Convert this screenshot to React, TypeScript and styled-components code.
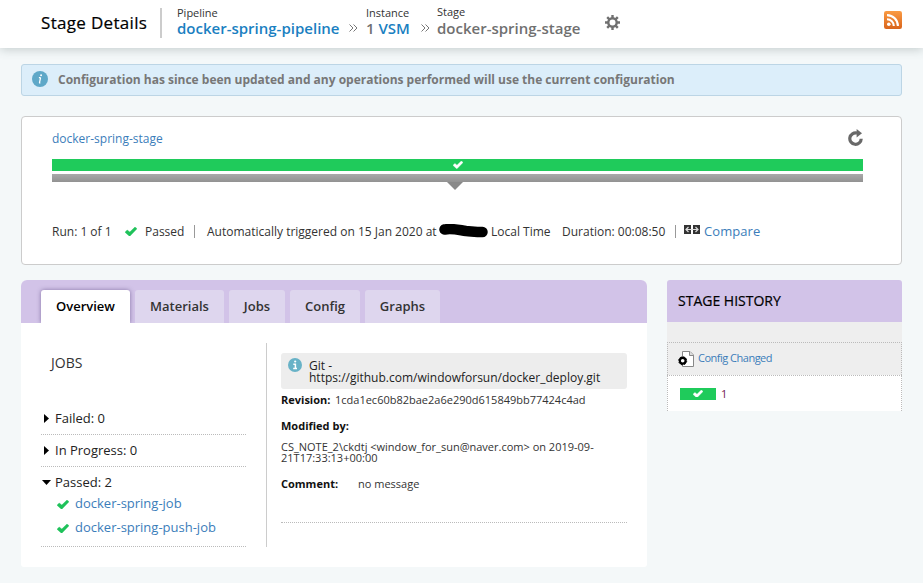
import React from "react";
import styled, { createGlobalStyle } from "styled-components";

const GlobalStyle = createGlobalStyle`
  * { box-sizing: border-box; }
  html, body { margin: 0; padding: 0; }
  body {
    background: #f4f8f9;
    color: #333;
    font-family: "Open Sans", "Noto Sans", sans-serif;
    font-size: 12px;
    overflow: hidden;
  }
`;

const Page = styled.div`
  width: 923px;
  height: 583px;
  overflow: hidden;
`;

const Header = styled.header`
  display: flex;
  height: 48px;
  padding: 0 21px 0 41px;
  background: #fff;
  box-shadow: 0 1px 10px rgba(70, 90, 90, 0.3);
`;

const Title = styled.h1`
  width: 119px;
  margin: 0;
  padding-top: 11px;
  font-size: 17px;
  font-weight: 500;
  line-height: 24px;
  letter-spacing: 0.32px;
  white-space: nowrap;
  color: #000;
  -webkit-text-stroke: 0.2px #000;
`;

const HeaderRule = styled.div`
  width: 2px;
  height: 30px;
  margin: 8px 15px 0 0;
  background: #ccc;
`;

const Crumb = styled.div<{ $width: number; $lift?: boolean }>`
  width: ${(p) => p.$width}px;
  padding-top: ${(p) => (p.$lift ? 4 : 5)}px;
  white-space: nowrap;
`;

const CrumbLabel = styled.div<{ $lift?: boolean }>`
  height: ${(p) => (p.$lift ? 16 : 15)}px;
  font-size: 11px;
  line-height: 16px;
  color: #333;
`;

const CrumbValue = styled.div`
  font-size: 15px;
  font-weight: 600;
  line-height: 16px;
  color: #707070;
`;

const BlueText = styled.a`
  color: #1a7fc1;
  text-decoration: none;
`;

const Chevrons = styled.svg<{ $width: number }>`
  width: 9px;
  height: 8px;
  margin: 24px ${(p) => p.$width - 9}px 0 0;
`;

const GearIcon = styled.svg`
  width: 15px;
  height: 15px;
  margin-top: 15px;
`;

const FeedIcon = styled.svg`
  width: 18px;
  height: 18px;
  margin: 11px 0 0 auto;
`;

const Main = styled.main`
  padding: 16px 21px 0;
`;

const Notice = styled.div`
  display: flex;
  align-items: center;
  gap: 10px;
  height: 32px;
  padding: 0 10px 2px;
  border: 1px solid #bcd5e5;
  border-radius: 3px;
  background: #dceefa;
  color: #777;
  font-weight: 700;
  letter-spacing: -0.01px;
  white-space: nowrap;
`;

const NoticeIcon = styled.svg`
  width: 16px;
  height: 16px;
`;

const StageCard = styled.section`
  height: 149px;
  margin-top: 20px;
  padding: 14px 38px 0 30px;
  border: 1px solid #ccc;
  border-radius: 4px;
  background: #fff;
`;

const StageHead = styled.div`
  display: flex;
  justify-content: space-between;
  height: 28px;
`;

const Link = styled.a<{ $size?: number; $spacing?: number }>`
  font-size: ${(p) => p.$size ?? 12}px;
  letter-spacing: ${(p) => p.$spacing ?? 0}px;
  line-height: 16px;
  color: #3b7dba;
  text-decoration: none;
  white-space: nowrap;
`;

const RefreshIcon = styled.svg`
  width: 15px;
  height: 17px;
  margin-top: -2px;
`;

const StatusBar = styled.div`
  display: flex;
  justify-content: center;
  align-items: center;
  height: 12px;
  background: #1fcb5b;
`;

const SelectedBar = styled.div`
  height: 8px;
  margin-top: 3px;
  background: linear-gradient(#a9a9a9, #929292);
`;

const Pointer = styled.div`
  width: 0;
  height: 0;
  margin-left: 395px;
  border: 8px solid transparent;
  border-top-color: #898989;
  border-bottom-width: 0;
`;

const RunInfo = styled.div`
  display: flex;
  height: 16px;
  margin-top: 33px;
  line-height: 18px;
  white-space: nowrap;
`;

const Piece = styled.span<{ $width: number; $spacing?: number }>`
  flex: none;
  width: ${(p) => p.$width}px;
  letter-spacing: ${(p) => p.$spacing ?? 0}px;
`;

const Bar = styled.span<{ $gap: number }>`
  flex: none;
  width: 1px;
  height: 13px;
  margin: 2px ${(p) => p.$gap}px 0 0;
  background: #999;
`;

const Redaction = styled.svg`
  flex: none;
  width: 50px;
  height: 14px;
  margin: 1px 2px 0 0;
`;

const CompareIcon = styled.svg`
  flex: none;
  width: 16px;
  height: 10px;
  margin: 2px 4px 0 0;
`;

const Check = styled.svg<{ $w?: number }>`
  flex: none;
  width: ${(p) => p.$w ?? 12}px;
  height: ${(p) => ((p.$w ?? 12) * 3) / 4}px;
`;

const RunCheck = styled(Check)`
  margin: 4px 8px 0 0;
`;

const Columns = styled.div`
  display: flex;
  align-items: flex-start;
  gap: 20px;
  margin-top: 15px;
`;

const Panel = styled.section`
  width: 626px;
  height: 287px;
  border-radius: 6px 6px 3px 3px;
  overflow: hidden;
  background: #fff;
`;

const TabBar = styled.nav`
  display: flex;
  gap: 5px;
  height: 43px;
  padding: 10px 20px 0;
  overflow: hidden;
  background: #d2c3e8;
`;

const Tab = styled.a<{ $width: number; $active?: boolean }>`
  width: ${(p) => p.$width}px;
  height: 33px;
  border-radius: 3px 3px 0 0;
  text-align: center;
  font-size: 13px;
  font-weight: 600;
  line-height: 33px;
  color: ${(p) => (p.$active ? "#000" : "#333")};
  background: ${(p) => (p.$active ? "#fff" : "#ded6ee")};
  box-shadow: ${(p) => (p.$active ? "0 0 4px rgba(70, 50, 110, 0.55)" : "none")};
`;

const PanelBody = styled.div`
  display: flex;
  padding: 20px 20px 0;
`;

const Jobs = styled.div`
  width: 226px;
  height: 204px;
  padding-right: 20px;
  border-right: 1px solid #ccc;
`;

const JobsTitle = styled.h3`
  margin: 0;
  padding: 11px 0 0 10px;
  height: 60px;
  font-size: 14px;
  font-weight: 400;
  line-height: 18px;
`;

const JobGroup = styled.div<{ $height: number }>`
  height: ${(p) => p.$height}px;
  padding-top: 6px;
  border-bottom: 1px dotted #bbb;
`;

const GroupLabel = styled.div`
  display: flex;
  align-items: center;
  height: 18px;
  color: #222;
  font-size: 13px;
`;

const Arrow = styled.svg`
  width: 12px;
  height: 11px;
  margin-right: 2px;
`;

const JobRow = styled.div`
  display: flex;
  align-items: center;
  gap: 6px;
  height: 24px;
  padding-left: 16px;
`;

const JobCheck = styled(Check)`
  margin-top: 2px;
`;

const Details = styled.div`
  width: 346px;
  margin: 10px 0 0 14px;
  height: 170px;
  border-bottom: 1px dotted #bbb;
  font-size: 11px;
  line-height: 16px;
`;

const Material = styled.div`
  display: flex;
  gap: 7px;
  height: 36px;
  padding: 6px 7px 0;
  border-radius: 3px;
  background: #ededed;
`;

const MaterialIcon = styled.svg`
  flex: none;
  width: 14px;
  height: 14px;
  margin-top: -1px;
`;

const MaterialText = styled.div`
  padding-top: 1px;
  font-size: 12px;
  line-height: 12px;
  color: #222;
`;

const DetailRow = styled.div<{ $top: number }>`
  display: flex;
  height: 16px;
  margin-top: ${(p) => p.$top}px;
  white-space: nowrap;
`;

const DetailLabel = styled.strong<{ $width?: number }>`
  width: ${(p) => p.$width ?? 80}px;
  color: #111;
  font-weight: 700;
`;

const Author = styled.p`
  margin: 7px 0 0;
  line-height: 11px;
`;

const History = styled.aside`
  width: 235px;
`;

const HistoryTitle = styled.h2`
  height: 42px;
  margin: 0;
  padding-left: 11px;
  border-radius: 3px 3px 0 0;
  background: #d2c3e8;
  font-size: 14px;
  font-weight: 500;
  line-height: 42px;
  color: #000;
  -webkit-text-stroke: 0.2px #000;
`;

const HistoryGap = styled.div`
  height: 20px;
  background: #eee;
`;

const HistoryRow = styled.div<{ $height: number; $shade?: boolean }>`
  display: flex;
  align-items: center;
  height: ${(p) => p.$height}px;
  padding: 0 0 ${(p) => (p.$shade ? 2 : 0)}px ${(p) => (p.$shade ? 10 : 12)}px;
  border: 1px dotted #bbb;
  border-bottom: 0;
  background: ${(p) => (p.$shade ? "#eee" : "#fff")};
`;

const FileIcon = styled.svg`
  width: 16px;
  height: 16px;
  margin: 2px 4px 0 0;
`;

const MiniStatus = styled.div`
  display: flex;
  align-items: center;
  justify-content: center;
  width: 36px;
  height: 12px;
  margin-right: 5px;
  background: #1fcb5b;
`;

const Counter = styled.span`
  font-size: 11px;
  color: #722050;
`;

const CHECK_PATH = "M0 5.2L2.2 3L4.8 5L10 0L12 1.7L5 9H4.2Z";

function DoubleChevron({ width }: { width: number }) {
  return (
    <Chevrons $width={width} viewBox="0 0 9 8" fill="none" stroke="#777">
      <path d="M.5.5L4 4L.5 7.5M4.5.5L8 4L4.5 7.5" />
    </Chevrons>
  );
}

function WhiteCheck() {
  return (
    <Check $w={10} viewBox="0 0 12 9" fill="#fff">
      <path d={CHECK_PATH} stroke="#fff" strokeWidth=".5" />
    </Check>
  );
}

const GEAR_ANGLES = [0, 45, 90, 135];

const TABS = [
  { label: "Overview", width: 89 },
  { label: "Materials", width: 89 },
  { label: "Jobs", width: 56 },
  { label: "Config", width: 70 },
  { label: "Graphs", width: 75 },
];

export default function App() {
  return (
    <Page>
      <GlobalStyle />
      <Header>
        <Title>Stage Details</Title>
        <HeaderRule />
        <Crumb $width={172}>
          <CrumbLabel>Pipeline</CrumbLabel>
          <CrumbValue><BlueText>docker-spring-pipeline</BlueText></CrumbValue>
        </Crumb>
        <DoubleChevron width={17} />
        <Crumb $width={55}>
          <CrumbLabel>Instance</CrumbLabel>
          <CrumbValue>1 <BlueText>VSM</BlueText></CrumbValue>
        </Crumb>
        <DoubleChevron width={16} />
        <Crumb $width={168} $lift>
          <CrumbLabel $lift>Stage</CrumbLabel>
          <CrumbValue>docker-spring-stage</CrumbValue>
        </Crumb>
        <GearIcon viewBox="0 0 15 15">
          {GEAR_ANGLES.map((a) => (
            <path key={a} d="M7.5 0V3.5M7.5 11.5V15" stroke="#707070" strokeWidth="2.4" transform={`rotate(${a} 7.5 7.5)`} />
          ))}
          <circle cx="7.5" cy="7.5" r="4.2" fill="none" stroke="#707070" strokeWidth="2.4" />
        </GearIcon>
        <FeedIcon viewBox="0 0 18 18">
          <defs>
            <linearGradient id="feed" x2="0" y2="1">
              <stop stopColor="#fa9b43" />
              <stop offset="1" stopColor="#d9641b" />
            </linearGradient>
          </defs>
          <rect width="18" height="18" rx="2.2" fill="url(#feed)" />
          <circle cx="4.8" cy="13.2" r="1.8" fill="#fff" />
          <path d="M3 8.2A6.8 6.8 0 0 1 9.8 15M3 4.1A10.9 10.9 0 0 1 13.9 15" fill="none" stroke="#fff" strokeWidth="2.1" />
        </FeedIcon>
      </Header>

      <Main>
        <Notice>
          <NoticeIcon viewBox="0 0 16 16">
            <circle cx="8" cy="8" r="8" fill="#5fa8c8" />
            <path d="M8.6 6.5L7.4 12M6.9 6.7H8.5M7 12H8.4" stroke="#fff" strokeWidth="1.2" />
            <circle cx="9.1" cy="4.2" r=".95" fill="#fff" />
          </NoticeIcon>
          Configuration has since been updated and any operations performed will use the current configuration
        </Notice>

        <StageCard>
          <StageHead>
            <Link>docker-spring-stage</Link>
            <RefreshIcon viewBox="0 0 15 17">
              <path d="M9 4.1A5.7 5.7 0 1 0 13.2 9.7" fill="none" stroke="#696969" strokeWidth="3.2" />
              <path d="M8.6 0L14 4.3L8.6 8.4Z" fill="#696969" />
            </RefreshIcon>
          </StageHead>
          <StatusBar><WhiteCheck /></StatusBar>
          <SelectedBar />
          <Pointer />
          <RunInfo>
            <Piece $width={73}>Run: 1 of 1</Piece>
            <RunCheck viewBox="0 0 12 9" fill="#1fc25a"><path d={CHECK_PATH} stroke="#1fc25a" strokeWidth=".4" /></RunCheck>
            <Piece $width={49}>Passed</Piece>
            <Bar $gap={12} />
            <Piece $width={232}>Automatically triggered on 15 Jan 2020 at</Piece>
            <Redaction viewBox="0 0 50 14">
              <path d="M5.5 5.5C13 4 20 6 27 7C34 7.5 37 8 43.5 8" fill="none" stroke="#000" strokeWidth="10.5" strokeLinecap="round" />
            </Redaction>
            <Piece $width={71}>Local Time</Piece>
            <Piece $width={113}>Duration: 00:08:50</Piece>
            <Bar $gap={8} />
            <CompareIcon viewBox="0 0 16 10">
              <path d="M0 0H7V9H0ZM9 0H16V9H9Z" fill="#333" />
              <path d="M2 4.5H14M4.5 2L2 4.5L4.5 7M11.5 2L14 4.5L11.5 7" fill="none" stroke="#ddd" strokeWidth="1.2" />
            </CompareIcon>
            <Link $size={13} $spacing={0.08}>Compare</Link>
          </RunInfo>
        </StageCard>

        <Columns>
          <Panel>
            <TabBar>
              {TABS.map((t, i) => (
                <Tab key={t.label} $width={t.width} $active={i === 0}>{t.label}</Tab>
              ))}
            </TabBar>
            <PanelBody>
              <Jobs>
                <JobsTitle>JOBS</JobsTitle>
                <JobGroup $height={32}>
                  <GroupLabel>
                    <Arrow viewBox="0 0 12 11"><path d="M3 1V10L8 5.5Z" /></Arrow>
                    Failed: 0
                  </GroupLabel>
                </JobGroup>
                <JobGroup $height={32}>
                  <GroupLabel>
                    <Arrow viewBox="0 0 12 11"><path d="M3 1V10L8 5.5Z" /></Arrow>
                    In Progress: 0
                  </GroupLabel>
                </JobGroup>
                <JobGroup $height={80}>
                  <GroupLabel>
                    <Arrow viewBox="0 0 12 11"><path d="M1 3H10L5.5 8Z" /></Arrow>
                    Passed: 2
                  </GroupLabel>
                  {["docker-spring-job", "docker-spring-push-job"].map((name) => (
                    <JobRow key={name}>
                      <JobCheck viewBox="0 0 12 9" fill="#1fc25a"><path d={CHECK_PATH} stroke="#1fc25a" strokeWidth=".4" /></JobCheck>
                      <Link $size={13}>{name}</Link>
                    </JobRow>
                  ))}
                </JobGroup>
              </Jobs>
              <Details>
                <Material>
                  <MaterialIcon viewBox="0 0 14 14">
                    <circle cx="7" cy="7" r="7" fill="#68b2c7" />
                    <path d="M5.3 6.2H7.4V10.5M5.2 10.6H9" fill="none" stroke="#fff" strokeWidth="1.5" />
                    <circle cx="7.2" cy="3.5" r="1.1" fill="#fff" />
                  </MaterialIcon>
                  <MaterialText>Git -<br />https://github.com/windowforsun/docker_deploy.git</MaterialText>
                </Material>
                <DetailRow $top={3}>
                  <DetailLabel $width={54}>Revision:</DetailLabel>
                  <span>1cda1ec60b82bae2a6e290d615849bb77424c4ad</span>
                </DetailRow>
                <DetailRow $top={10}><DetailLabel>Modified by:</DetailLabel></DetailRow>
                <Author>CS_NOTE_2\ckdtj &lt;window_for_sun@naver.com&gt; on 2019-09-<br />21T17:33:13+00:00</Author>
                <DetailRow $top={13}>
                  <DetailLabel $width={77}>Comment:</DetailLabel>
                  <span>no message</span>
                </DetailRow>
              </Details>
            </PanelBody>
          </Panel>

          <History>
            <HistoryTitle>STAGE HISTORY</HistoryTitle>
            <HistoryGap />
            <HistoryRow $height={33} $shade>
              <FileIcon viewBox="0 0 16 16">
                <path d="M4.5.5H12L15.5 4V15.5H4.5Z" fill="#fff" stroke="#888" />
                <path d="M11.5.5V4.5H15.5" fill="#ddd" stroke="#888" />
                <circle cx="4.7" cy="9.8" r="2.9" fill="#fff" stroke="#000" strokeWidth="2.2" />
                <circle cx="4.7" cy="9.8" r="4" fill="none" stroke="#000" strokeDasharray="1.57 1.57" />
              </FileIcon>
              <Link $size={11} $spacing={-0.5}>Config Changed</Link>
            </HistoryRow>
            <HistoryRow $height={36}>
              <MiniStatus><WhiteCheck /></MiniStatus>
              <Counter>1</Counter>
            </HistoryRow>
          </History>
        </Columns>
      </Main>
    </Page>
  );
}
